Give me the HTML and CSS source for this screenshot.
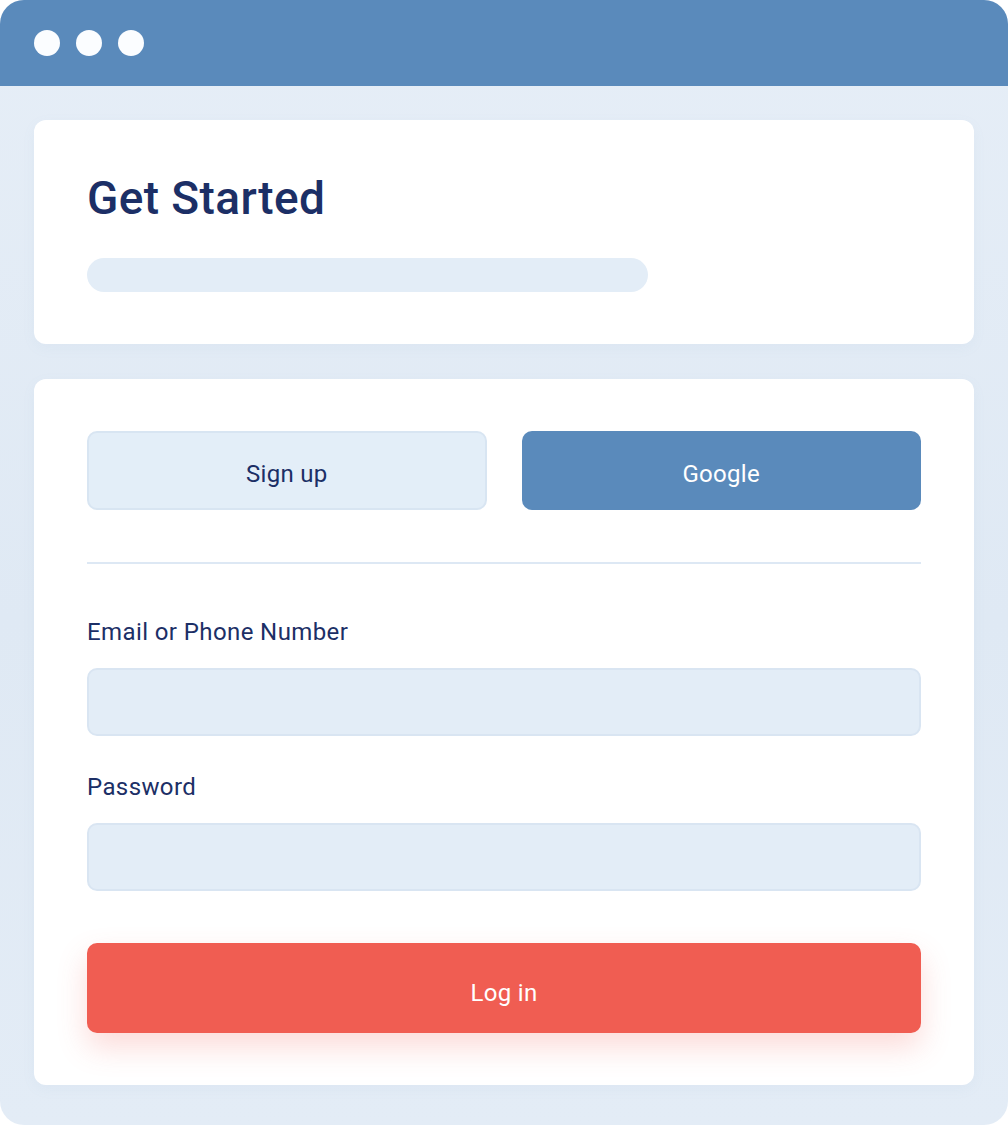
FILE: index.html
```html
<!DOCTYPE html>
<html lang="en">
<head>
<meta charset="utf-8">
<title>Get Started</title>
<link rel="stylesheet" href="styles.css">
</head>
<body>
<div class="window">
  <div class="titlebar">
    <span class="dot"></span>
    <span class="dot"></span>
    <span class="dot"></span>
  </div>
  <div class="content">
    <section class="card card-head">
      <h1 class="title">Get Started</h1>
      <div class="placeholder-bar"></div>
    </section>
    <section class="card card-form">
      <div class="btn-row">
        <button class="btn btn-light">Sign up</button>
        <button class="btn btn-blue">Google</button>
      </div>
      <hr class="divider">
      <label class="label">Email or Phone Number</label>
      <div class="input"></div>
      <label class="label label-second">Password</label>
      <div class="input"></div>
      <button class="btn btn-login">Log in</button>
    </section>
  </div>
</div>
</body>
</html>
```

FILE: styles.css
```css
html, body {
  margin: 0;
  padding: 0;
  background: #ffffff;
}

body {
  font-family: Roboto, "Liberation Sans", sans-serif;
  color: #1c2f66;
}

.window {
  width: 1008px;
  height: 1125px;
  border-radius: 24px;
  overflow: hidden;
  display: flex;
  flex-direction: column;
  background: linear-gradient(180deg, #e6eef7 0%, #dfe9f4 55%, #e3ecf6 100%);
}

.titlebar {
  height: 86px;
  flex: none;
  background: #5a8abb;
  display: flex;
  align-items: center;
  gap: 16px;
  padding-left: 34px;
  box-sizing: border-box;
}

.dot {
  width: 26px;
  height: 26px;
  border-radius: 50%;
  background: #fbfdff;
}

.content {
  padding: 34px 34px 40px;
  display: flex;
  flex-direction: column;
  gap: 35px;
}

.card {
  background: #ffffff;
  border-radius: 12px;
  padding: 0 53px;
  box-shadow: 0 4px 14px rgba(120, 150, 190, 0.06);
}

.card-head {
  height: 224px;
  box-sizing: border-box;
  padding-top: 55px;
}

.title {
  margin: 0;
  font-size: 46px;
  line-height: 46px;
  font-weight: 500;
  color: #1c2f66;
  letter-spacing: 0.4px;
}

.placeholder-bar {
  margin-top: 37px;
  width: 561px;
  height: 34px;
  border-radius: 17px;
  background: #e3edf7;
}

.card-form {
  padding-top: 52px;
  padding-bottom: 52px;
  display: flex;
  flex-direction: column;
}

.btn {
  font-family: Roboto, "Liberation Sans", sans-serif;
  font-size: 24px;
  font-weight: 400;
  letter-spacing: 0.3px;
  border-radius: 10px;
  height: 79px;
  box-sizing: border-box;
  display: flex;
  align-items: center;
  justify-content: center;
  padding: 6px 0 0;
  cursor: pointer;
}

.btn-row {
  display: grid;
  grid-template-columns: 1fr 1fr;
  gap: 35px;
}

.btn-light {
  background: #e3eef8;
  border: 2px solid #d8e5f2;
  color: #1c2f66;
}

.btn-blue {
  background: #5a8abb;
  border: none;
  color: #ffffff;
}

.divider {
  margin: 52px 0 0;
  border: none;
  height: 2px;
  background: #dde8f4;
}

.label {
  display: block;
  margin-top: 53px;
  font-size: 24px;
  line-height: 30px;
  font-weight: 400;
  letter-spacing: 0.4px;
  color: #1c2f66;
}

.label-second {
  margin-top: 36px;
}

.input {
  margin-top: 21px;
  height: 68px;
  box-sizing: border-box;
  border-radius: 10px;
  background: #e3edf7;
  border: 2px solid #d9e5f2;
}

.btn-login {
  margin-top: 52px;
  height: 90px;
  width: 100%;
  padding-top: 10px;
  border: none;
  background: #f05d52;
  color: #ffffff;
  box-shadow: 0 14px 30px rgba(240, 93, 82, 0.22);
}
```
